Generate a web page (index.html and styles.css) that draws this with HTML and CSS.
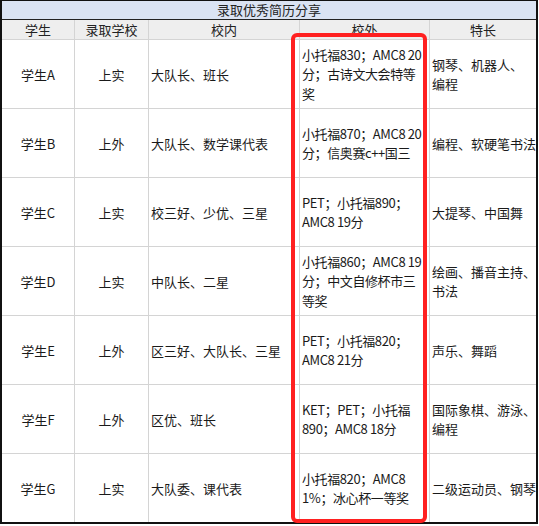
FILE: index.html
```html
<!DOCTYPE html>
<html lang="zh-CN">
<head>
  <meta charset="UTF-8" />
  <title>录取优秀简历分享</title>
  <link rel="stylesheet" href="styles.css">
</head>
<body>
  <div class="sheet">
    <div class="title">录取优秀简历分享</div>

    <div class="grid">
      <div class="head">学生</div>
      <div class="head">录取学校</div>
      <div class="head">校内</div>
      <div class="head">校外</div>
      <div class="head">特长</div>

      <div class="cell center">学生A</div>
      <div class="cell center">上实</div>
      <div class="cell">大队长、班长</div>
      <div class="cell out">小托福830；AMC8 20<br>分；古诗文大会特等<br>奖</div>
      <div class="cell">钢琴、机器人、<br>编程</div>

      <div class="cell center">学生B</div>
      <div class="cell center">上外</div>
      <div class="cell">大队长、数学课代表</div>
      <div class="cell out">小托福870；AMC8 20<br>分；信奥赛c++国三</div>
      <div class="cell">编程、软硬笔书法</div>

      <div class="cell center">学生C</div>
      <div class="cell center">上实</div>
      <div class="cell">校三好、少优、三星</div>
      <div class="cell out">PET；小托福890；<br>AMC8 19分</div>
      <div class="cell">大提琴、中国舞</div>

      <div class="cell center">学生D</div>
      <div class="cell center">上实</div>
      <div class="cell">中队长、二星</div>
      <div class="cell out">小托福860；AMC8 19<br>分；中文自修杯市三<br>等奖</div>
      <div class="cell">绘画、播音主持、<br>书法</div>

      <div class="cell center">学生E</div>
      <div class="cell center">上外</div>
      <div class="cell">区三好、大队长、三星</div>
      <div class="cell out">PET；小托福820；<br>AMC8 21分</div>
      <div class="cell">声乐、舞蹈</div>

      <div class="cell center">学生F</div>
      <div class="cell center">上外</div>
      <div class="cell">区优、班长</div>
      <div class="cell out">KET；PET；小托福<br>890；AMC8 18分</div>
      <div class="cell">国际象棋、游泳、<br>编程</div>

      <div class="cell center">学生G</div>
      <div class="cell center">上实</div>
      <div class="cell">大队委、课代表</div>
      <div class="cell out">小托福820；AMC8<br>1%；冰心杯一等奖</div>
      <div class="cell">二级运动员、钢琴</div>
    </div>

    <!-- highlight round the 校外 column -->
    <div class="mark"></div>
  </div>
</body>
</html>
```

FILE: styles.css
```css
body {
  margin: 0;
  background: #fff;
  font-family: "Noto Sans CJK SC", "Microsoft YaHei", sans-serif;
  font-size: 13px;
  color: #1a1a1a;
}

.sheet {
  position: relative;
  width: 538px;
  box-sizing: border-box;
  border: 2px solid #111;
  border-top-width: 1px;
}

.title {
  height: 18px;
  line-height: 18px;
  text-align: center;
  background-color: #dae3f3;
  border-bottom: 1px solid #222;
  color: #222;
}

.grid {
  display: grid;
  grid-template-columns: 72px 73px 150px 129px 106px;
  grid-template-rows: 19px repeat(7, 68px);
  gap: 1px;
  background-color: #d4d4d4;
}

.head {
  background-color: #eeeeee;
  text-align: center;
  line-height: 19px;
  color: #222;
}

.cell {
  display: flex;
  align-items: center;
  padding-left: 2px;
  background-color: #fff;
  line-height: 19px;
  white-space: nowrap;
  overflow: hidden;
}

.cell.center {
  justify-content: center;
  padding-left: 0;
}

.cell.out {
  letter-spacing: -0.4px;
  line-height: 19.5px;
}

.mark {
  position: absolute;
  left: 289px;
  top: 32px;
  width: 136px;
  height: 490px;
  box-sizing: border-box;
  border: 4px solid #ff2020;
  border-radius: 6px;
}
```
